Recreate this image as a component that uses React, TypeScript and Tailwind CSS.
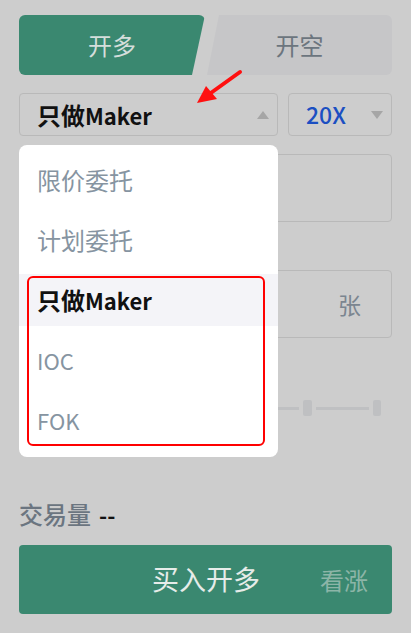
import React from "react";

const ORDER_TYPES = [
  { label: "限价委托", latin: "", active: false },
  { label: "计划委托", latin: "", active: false },
  { label: "只做", latin: "Maker", active: true },
  { label: "", latin: "IOC", active: false },
  { label: "", latin: "FOK", active: false },
];

export default function App() {
  return (
    <div className="relative h-[633px] w-[411px] overflow-hidden bg-[#cdcdcd] px-[19px] font-['Noto_Sans_CJK_SC','Noto_Sans',sans-serif]">
      {/* 开多 / 开空 tabs */}
      <div className="mt-[15px] flex h-[60px] gap-[2px]">
        <div className="flex w-[186px] items-center justify-center rounded-l-[6px] rounded-tr-[6px] bg-[#3a8870] text-[24px] text-[#d4dedb] [clip-path:polygon(0_0,100%_0,calc(100%-13px)_100%,0_100%)]">
          开多
        </div>
        <div className="flex flex-1 items-center justify-center rounded-r-[6px] bg-[#c6c6c8] text-[24px] text-[#6c757e] [clip-path:polygon(12px_0,100%_0,100%_100%,0_100%)]">
          开空
        </div>
      </div>

      {/* order type + leverage */}
      <div className="mt-[18px] flex h-[43px] gap-[10px]">
        <div className="flex w-[259px] items-center justify-between rounded-[4px] border border-[#b9b9b9] pl-[17px] pr-[8px]">
          <span className="text-[22px] font-semibold text-[#111]">
            <span className="text-[24px]">只做</span>Maker
          </span>
          <span className="h-0 w-0 border-x-[6px] border-b-[8px] border-x-transparent border-b-[#a6a6a6]" />
        </div>
        <div className="flex flex-1 items-center justify-between rounded-[4px] border border-[#b9b9b9] pl-[17px] pr-[8px]">
          <span className="text-[23px] font-medium text-[#1b4fc2]">20X</span>
          <span className="h-0 w-0 border-x-[6px] border-t-[8px] border-x-transparent border-t-[#a6a6a6]" />
        </div>
      </div>

      {/* form behind the menu */}
      <div className="mt-[18px] h-[68px] rounded-[4px] border border-[#b9b9b9]" />
      <div className="mt-[48px] flex h-[68px] items-center justify-end rounded-[4px] border border-[#b9b9b9] pr-[30px]">
        <span className="text-[23px] text-[#7b8590]">张</span>
      </div>
      <div className="mt-[60px] flex h-[20px] items-center">
        <div className="h-[40px] w-[2px] bg-[#b9c8c1]" />
        <div className="flex flex-1 items-center justify-end pr-[11px]">
          <div className="h-[3px] flex-1 bg-[#bfc0c2]" />
          <div className="mx-[4px] h-[16px] w-[9px] rounded-[2px] bg-[#bfc0c2]" />
          <div className="h-[3px] w-[53px] bg-[#bfc0c2]" />
          <div className="ml-[4px] h-[16px] w-[8px] rounded-[2px] bg-[#bfc0c2]" />
        </div>
      </div>

      <div className="mt-[78px] flex items-center gap-[8px] text-[24px] font-medium">
        <span className="text-[#6b7580]">交易量</span>
        <span className="text-[22px] font-bold text-[#111]">--</span>
      </div>

      <div className="mt-[13px] flex h-[69px] items-center rounded-[4px] bg-[#3a8870]">
        <span className="ml-[133px] text-[27px] text-[#e6ece9]">买入开多</span>
        <span className="ml-[60px] text-[24px] text-[#8cb5a7]">看涨</span>
      </div>

      {/* dropdown menu */}
      <div className="absolute left-[19px] top-[145px] w-[259px] rounded-[8px] bg-white pt-[5px] pb-[7px]">
        {ORDER_TYPES.map((t) => (
          <div key={t.label + t.latin} className="flex h-[60px] items-center">
            <div
              className={`flex h-[52px] w-full items-center pl-[18px] text-[22px] ${
                t.active ? "bg-[#f4f4f8] font-semibold text-[#111]" : "text-[#8694a1]"
              }`}
            >
              {t.label && <span className="text-[24px]">{t.label}</span>}
              {t.latin}
            </div>
          </div>
        ))}
        <div className="pointer-events-none absolute left-[8px] top-[131px] h-[170px] w-[238px] rounded-[6px] border-2 border-[#ff0000]" />
      </div>

      {/* red arrow annotation */}
      <svg className="absolute left-[190px] top-[66px]" width="56" height="42" viewBox="0 0 56 42">
        <line x1="50" y1="6" x2="18" y2="29" stroke="#ff1010" strokeWidth="4" strokeLinecap="round" />
        <polygon points="7,37 16,20 27,33" fill="#ff1010" />
      </svg>
    </div>
  );
}
